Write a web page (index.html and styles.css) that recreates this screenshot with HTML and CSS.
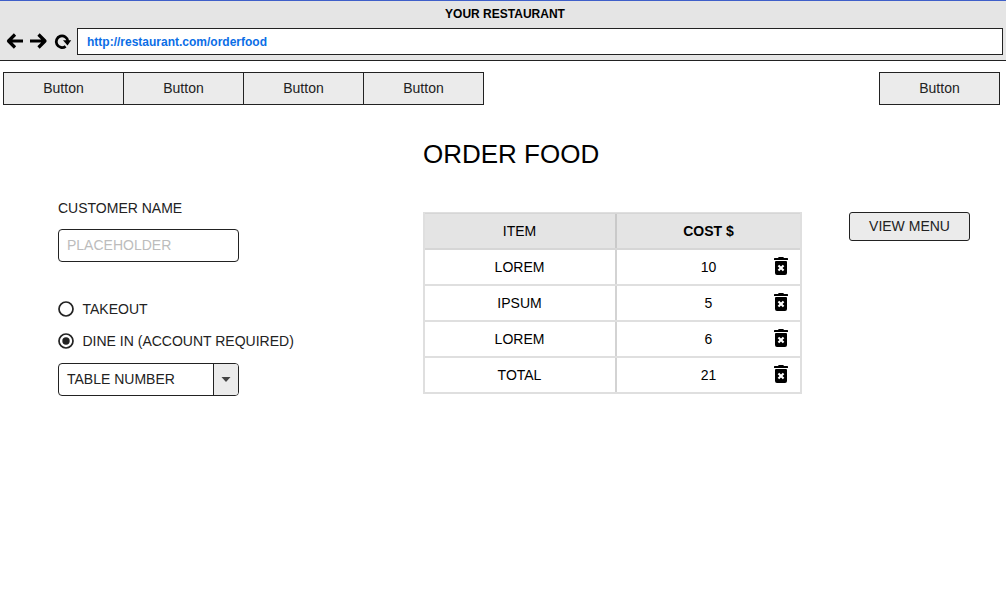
FILE: index.html
```html
<!DOCTYPE html>
<html lang="en">
<head>
<meta charset="utf-8">
<title>Your Restaurant</title>
<link rel="stylesheet" href="styles.css">
</head>
<body>
<svg width="0" height="0" class="defs">
  <symbol id="trash" viewBox="0 0 14 18">
    <path fill-rule="evenodd" d="M.5 1H4Q4.300 0 5.200 0h3.600Q9.700 0 10 1h3.500l.5.500V3H0V1.500zM2 4h10q1 0 1 1v11a2 2 0 0 1-2 2H3a2 2 0 0 1-2-2V5q0-1 1-1zM3.700 9.200 5.500 11 3.700 12.800l1.500 1.500L7 12.500l1.800 1.800 1.500-1.500L8.500 11l1.800-1.800-1.500-1.500L7 9.500 5.200 7.700z"/>
  </symbol>
</svg>
<header class="browser">
  <div class="title">YOUR RESTAURANT</div>
  <div class="bar">
    <svg class="nav" width="66" height="18" viewBox="0 0 66 18">
      <g fill="none" stroke="#000" stroke-width="3.200" stroke-linejoin="round">
        <path d="M9 2.500 2.500 9 9 15.500M3 9h14M32.500 2.500 39 9l-6.500 6.500M38.500 9H24"/>
        <path stroke-width="2.800" d="M59.600 14.300A5.800 5.800 0 1 1 61.800 9"/>
      </g>
      <path d="M57 8.300h8.200L61.500 13.500z"/>
    </svg>
    <div class="url">http://restaurant.com/orderfood</div>
  </div>
</header>
<nav class="menu">
  <div class="tabs">
    <div class="tab">Button</div><div class="tab">Button</div><div class="tab">Button</div><div class="tab">Button</div>
  </div>
  <div class="tab">Button</div>
</nav>
<main>
  <section class="form">
    <div class="label">CUSTOMER NAME</div>
    <div class="field placeholder">PLACEHOLDER</div>
    <div class="option first"><svg width="16" height="16"><circle class="ring" cx="8" cy="8" r="7"/></svg>TAKEOUT</div>
    <div class="option"><svg width="16" height="16"><circle class="ring" cx="8" cy="8" r="7"/><circle class="dot" cx="8" cy="8" r="3.700"/></svg>DINE IN (ACCOUNT REQUIRED)</div>
    <div class="field select"><span>TABLE NUMBER</span><div class="arrow"><svg width="10" height="5"><path d="M.5 0h9L5 5z"/></svg></div></div>
  </section>
  <section class="order">
    <h1>ORDER FOOD</h1>
    <div class="table">
      <div class="row head"><div class="item">ITEM</div><div class="cost">COST $</div></div>
      <div class="row"><div class="item">LOREM</div><div class="cost">10<svg class="trash"><use href="#trash"/></svg></div></div>
      <div class="row"><div class="item">IPSUM</div><div class="cost">5<svg class="trash"><use href="#trash"/></svg></div></div>
      <div class="row"><div class="item">LOREM</div><div class="cost">6<svg class="trash"><use href="#trash"/></svg></div></div>
      <div class="row"><div class="item">TOTAL</div><div class="cost">21<svg class="trash"><use href="#trash"/></svg></div></div>
    </div>
  </section>
  <div class="view">VIEW MENU</div>
</main>
</body>
</html>
```
FILE: styles.css
```css
* { box-sizing: border-box; }
body { margin: 0; width: 1006px; height: 590px; overflow: hidden; background: #fff; color: #222; font: 14px/16px "Liberation Sans", Arial, sans-serif; }
.defs { display: block; height: 0; }
svg { display: block; flex: none; }
.browser { height: 61px; background: #e5e5e5; border-top: 1px solid #3f5fc9; border-bottom: 1px solid #222; }
.title { height: 27px; padding-left: 4px; text-align: center; font-weight: bold; font-size: 12px; line-height: 26px; color: #000; }
.bar { display: flex; padding-right: 3px; }
.nav { margin: 4px 5px 0 6px; }
.url { flex: 1; height: 27px; padding-left: 9px; background: #fff; border: 1px solid #222; color: #0b6ee6; font-weight: bold; font-size: 12px; line-height: 26px; }
.menu { display: flex; justify-content: space-between; padding: 11px 6px 0 3px; }
.tabs { display: flex; }
.tab { width: 121px; height: 33px; border: 1px solid #222; background: #ebebeb; text-align: center; line-height: 31px; }
.tabs .tab + .tab { margin-left: -1px; }
main { display: flex; }
.form { width: 365px; margin-left: 58px; padding-top: 95px; }
.label { height: 29px; line-height: 17px; }
.field { width: 181px; height: 33px; border: 1px solid #222; border-radius: 4px; padding-left: 8px; line-height: 31px; }
.placeholder { color: #bcbcbc; }
.option { display: flex; align-items: center; gap: 9px; height: 16px; margin: 16px 0 0 -0.5px; }
.option.first { margin-top: 39px; }
.ring { fill: #fff; stroke: #222; stroke-width: 1.7; }
.dot { fill: #222; }
.select { display: flex; justify-content: space-between; margin-top: 14px; overflow: hidden; }
.arrow { display: flex; align-items: center; justify-content: center; width: 25px; border-left: 1px solid #222; background: #ebebeb; fill: #444; }
.order { width: 379px; padding-top: 33px; color: #000; }
h1 { margin: 0; height: 74px; font-size: 26px; font-weight: normal; line-height: 32px; }
.table { border: 2px solid #dfdfdf; border-width: 1px 2px 0; }
.row { display: flex; height: 36px; border-bottom: 2px solid #dfdfdf; text-align: center; line-height: 35px; }
.head { height: 37px; background: #e4e4e4; border-top: 1px solid #d5d5d5; border-color: #d6d6d6; }
.item { width: 190px; padding-right: 1px; }
.cost { position: relative; flex: 1; border-left: 2px solid #d3d3d3; }
.head .cost { font-weight: bold; border-color: #c9c9c9; }
.trash { position: absolute; right: 12px; top: 7px; width: 14px; height: 18px; fill: #000; }
.view { width: 121px; height: 29px; margin: 107px 0 0 47px; border: 1px solid #222; border-radius: 3px; background: #ebebeb; text-align: center; line-height: 27px; }
```
